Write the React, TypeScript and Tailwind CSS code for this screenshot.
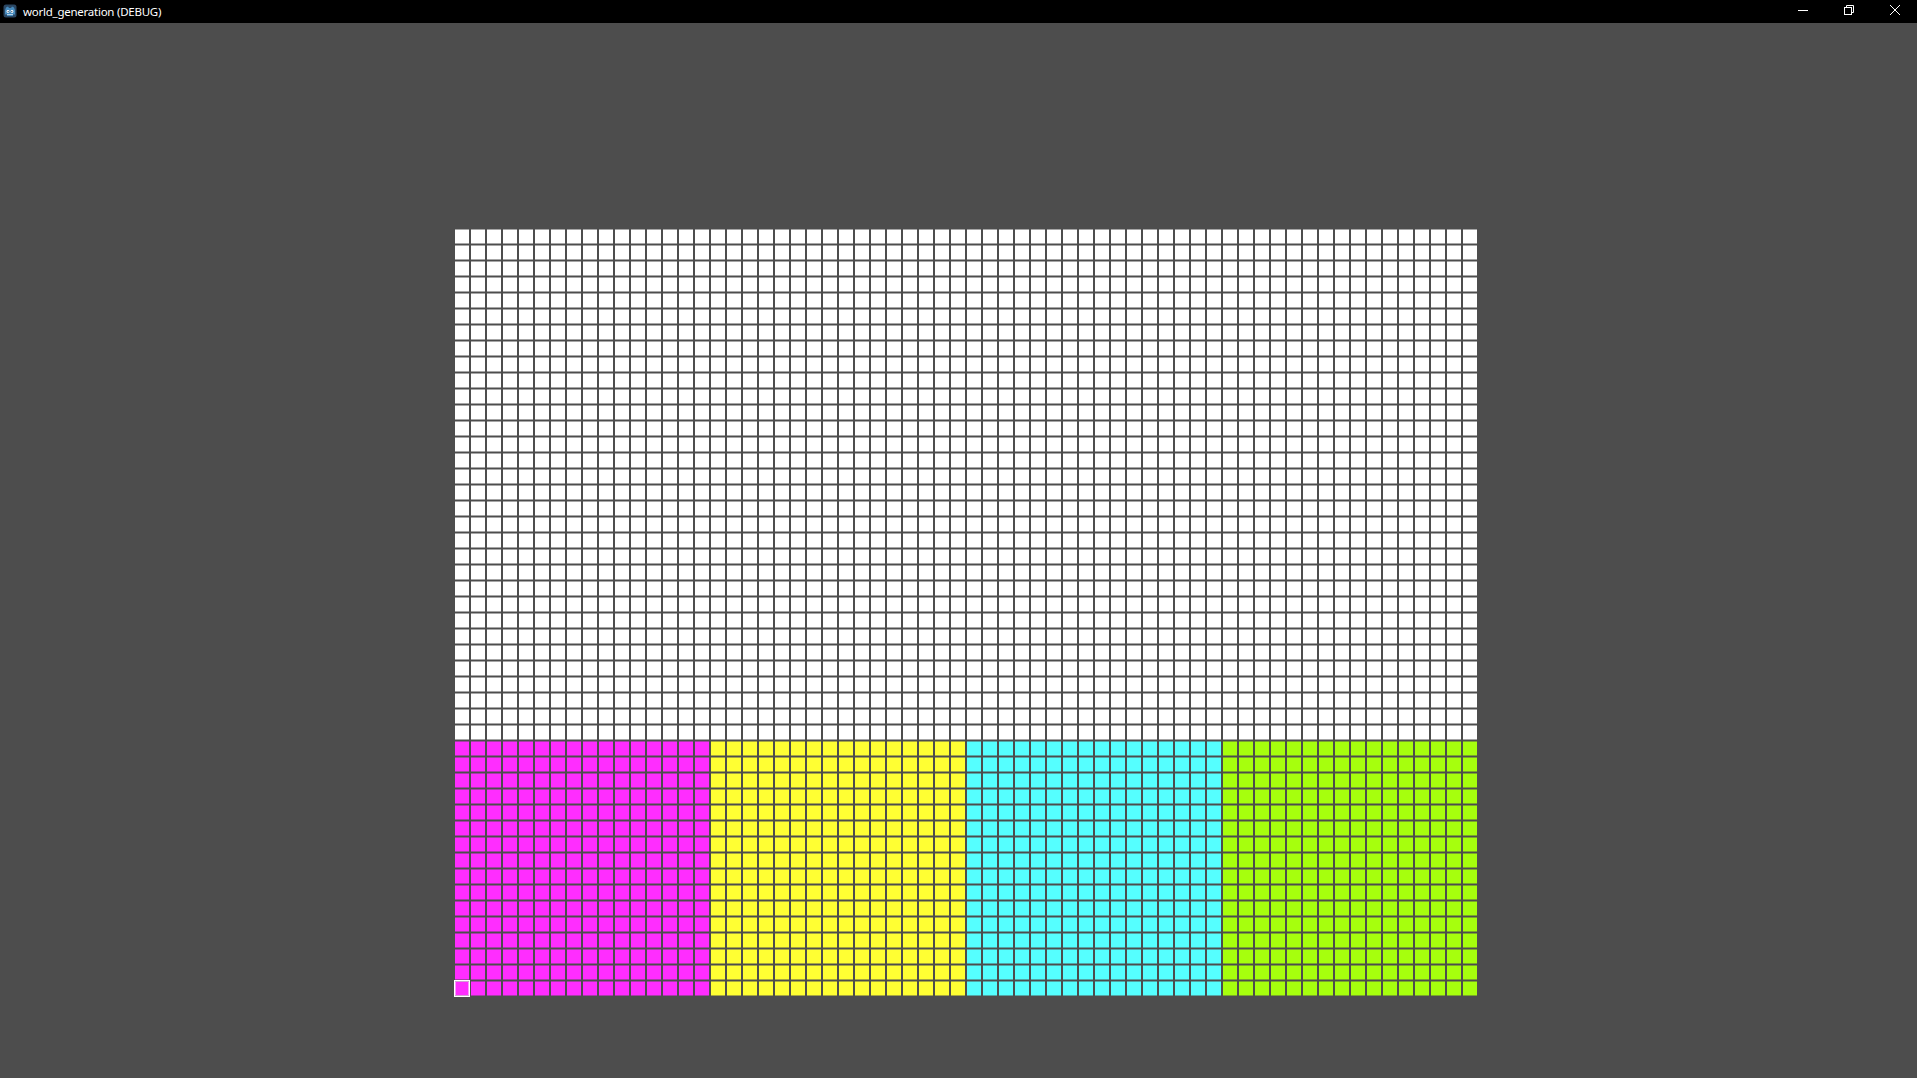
import React from 'react';

const COLS = 64;
const ROWS = 48;

const palette = {
  white: 'bg-white border-white/50',
  magenta: 'bg-[#ff2dff] border-[#ff2dff]/50',
  yellow: 'bg-[#ffff33] border-[#ffff33]/50',
  cyan: 'bg-[#55ffff] border-[#55ffff]/50',
  lime: 'bg-[#a6ff0d] border-[#a6ff0d]/50',
};

function cellColor(row: number, col: number) {
  if (row < 32) return palette.white;
  if (col < 16) return palette.magenta;
  if (col < 32) return palette.yellow;
  if (col < 48) return palette.cyan;
  return palette.lime;
}

function GodotIcon() {
  return (
    <svg width="16" height="16" viewBox="0 0 16 16" className="shrink-0">
      <rect x="1.5" y="1.5" width="13" height="13" rx="2.5" fill="#2b4763" />
      <path d="M4 4.5 L6 3.5 L7 5 H9 L10 3.5 L12 4.5 L13 7.5 V11.5 H11 V13 H5 V11.5 H3 V7.5 Z" fill="#478cbf" />
      <circle cx="6" cy="8.5" r="1.4" fill="#fff" />
      <circle cx="10" cy="8.5" r="1.4" fill="#fff" />
      <circle cx="6.2" cy="8.6" r="0.7" fill="#2b4763" />
      <circle cx="9.8" cy="8.6" r="0.7" fill="#2b4763" />
      <path d="M5 11.5 H11" stroke="#cfe3f3" strokeWidth="0.8" />
    </svg>
  );
}

function TitleBar() {
  return (
    <div className="flex h-[23px] items-center bg-black text-white">
      <div className="ml-[2px] mt-[-1px]">
        <GodotIcon />
      </div>
      <span className="ml-[5px] font-['Noto_Sans',sans-serif] text-[11.5px] leading-none tracking-[-0.25px]">world_generation (DEBUG)</span>
      <div className="ml-auto flex h-full items-start">
        <button className="flex h-[20px] w-[46px] items-center justify-center" aria-label="Minimize">
          <svg width="10" height="10" viewBox="0 0 10 10" fill="none" stroke="#fff" strokeWidth="1">
            <path d="M0 5.5 H10" />
          </svg>
        </button>
        <button className="flex h-[20px] w-[46px] items-center justify-center" aria-label="Restore">
          <svg width="10" height="10" viewBox="0 0 10 10" fill="none" stroke="#fff" strokeWidth="1">
            <rect x="0.5" y="2.5" width="7" height="7" />
            <path d="M2.5 2.5 V0.5 H9.5 V7.5 H7.5" />
          </svg>
        </button>
        <button className="mr-[-1px] flex h-[20px] w-[46px] items-center justify-center" aria-label="Close">
          <svg width="10" height="10" viewBox="0 0 10 10" fill="none" stroke="#fff" strokeWidth="1">
            <path d="M0 0 L10 10 M10 0 L0 10" />
          </svg>
        </button>
      </div>
    </div>
  );
}

export default function App() {
  const cells = [];
  for (let row = 0; row < ROWS; row++) {
    for (let col = 0; col < COLS; col++) {
      const selected = row === ROWS - 1 && col === 0;
      cells.push(
        <div key={`${row}-${col}`} className={`relative border-y bg-clip-padding ${cellColor(row, col)}`}>
          {selected && <div className="absolute left-[-1px] top-[-2px] h-[17px] w-[16px] border border-white shadow-[inset_0_0_0_1px_#ffffff80]" />}
        </div>
      );
    }
  }

  return (
    <div className="flex h-screen flex-col overflow-hidden bg-[#4d4d4d]">
      <TitleBar />
      <div className="flex-1 pl-[455px] pt-[206px]">
        <div className="grid w-[1022px] grid-cols-[repeat(64,14px)] auto-rows-[15px] gap-x-[2px] gap-y-[1px]">
          {cells}
        </div>
      </div>
    </div>
  );
}
